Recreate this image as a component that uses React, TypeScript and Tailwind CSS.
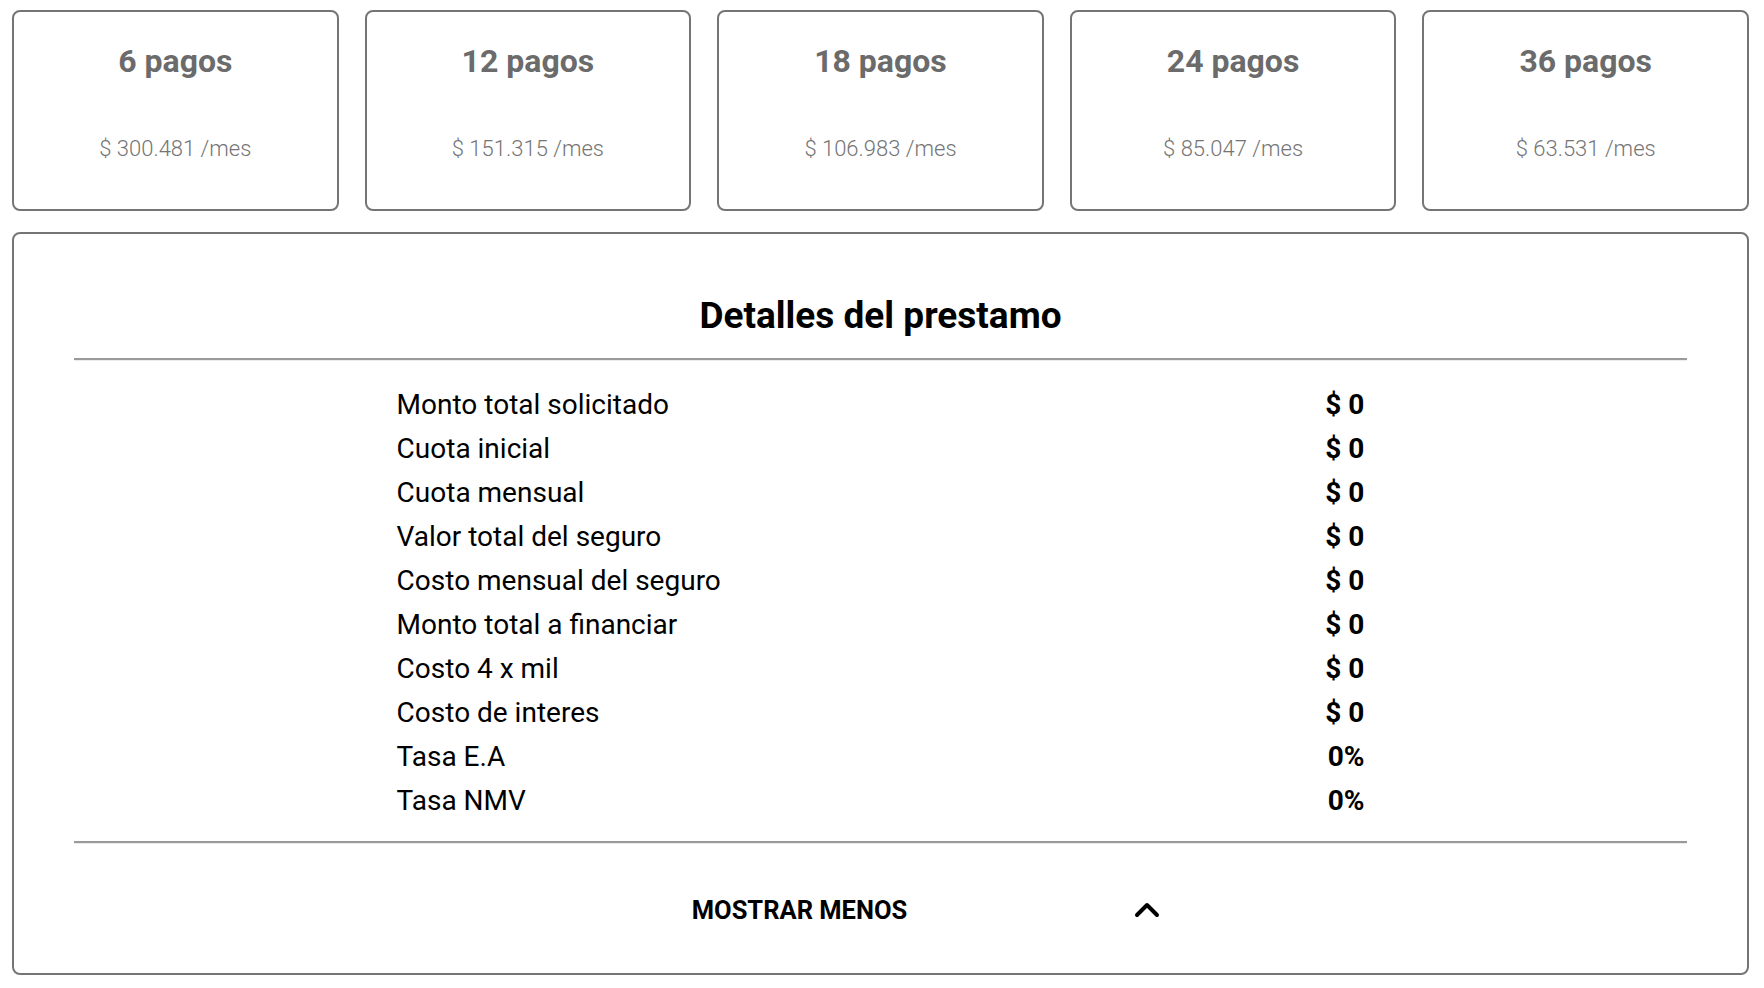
import React from "react";
import { ChevronUp } from "lucide-react";

const plans = [
  { n: "6 pagos", v: "$ 300.481 /mes" },
  { n: "12 pagos", v: "$ 151.315 /mes" },
  { n: "18 pagos", v: "$ 106.983 /mes" },
  { n: "24 pagos", v: "$ 85.047 /mes" },
  { n: "36 pagos", v: "$ 63.531 /mes" },
];

const rows = [
  ["Monto total solicitado", "$ 0"],
  ["Cuota inicial", "$ 0"],
  ["Cuota mensual", "$ 0"],
  ["Valor total del seguro", "$ 0"],
  ["Costo mensual del seguro", "$ 0"],
  ["Monto total a financiar", "$ 0"],
  ["Costo 4 x mil", "$ 0"],
  ["Costo de interes", "$ 0"],
  ["Tasa E.A", "0%"],
  ["Tasa NMV", "0%"],
];

function Divider() {
  return <div className="h-0 border-t-2 border-b border-t-[#9a9a9a] border-b-[#ececec]" />;
}

export default function App() {
  return (
    <div
      className="w-[1764px] h-[988px] bg-white overflow-hidden"
      style={{ fontFamily: "Roboto, 'Noto Sans', sans-serif" }}
    >
      <div className="pt-[10px] pl-[12px] pr-[15px] flex gap-[26px]">
        {plans.map((p) => (
          <div
            key={p.n}
            className="flex-1 h-[201px] border-2 border-[#757575] rounded-[8px] flex flex-col items-center"
          >
            <div className="mt-[30px] h-[38px] leading-[38px] text-[32px] font-bold text-[#6b6b6b]">
              {p.n}
            </div>
            <div className="mt-[55px] h-[28px] leading-[28px] text-[22px] font-light text-[#757575]">
              {p.v}
            </div>
          </div>
        ))}
      </div>

      <div className="mt-[21px] ml-[12px] mr-[15px] h-[743px] border-2 border-[#757575] rounded-[8px] px-[60px] pt-[60px]">
        <h2 className="text-center text-[37px] leading-[44px] font-bold text-black">
          Detalles del prestamo
        </h2>
        <div className="mt-[20px]">
          <Divider />
        </div>
        <div className="mx-auto w-[60%] mt-[22px]">
          {rows.map(([l, v]) => (
            <div key={l} className="flex justify-between h-[44px] leading-[44px] text-[28px] text-black">
              <span>{l}</span>
              <span className="font-bold">{v}</span>
            </div>
          ))}
        </div>
        <div className="mt-[18px]">
          <Divider />
        </div>
        <div className="mt-[44px] flex items-center justify-center pl-[98px] h-[44px]">
          <span className="text-[25.5px] font-bold text-black">MOSTRAR MENOS</span>
          <ChevronUp className="ml-[220px] w-[40px] h-[40px] text-black" strokeWidth={2.4} />
        </div>
      </div>
    </div>
  );
}
